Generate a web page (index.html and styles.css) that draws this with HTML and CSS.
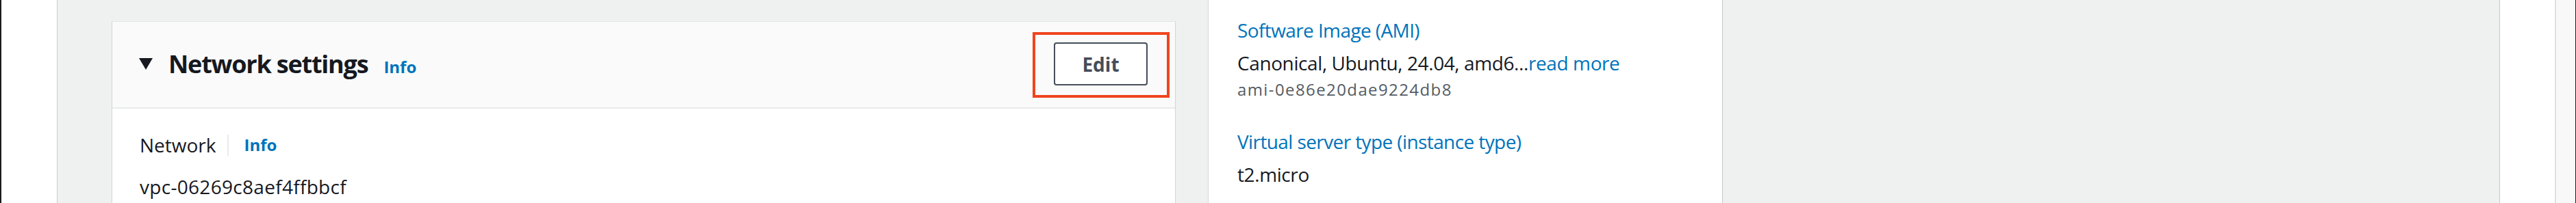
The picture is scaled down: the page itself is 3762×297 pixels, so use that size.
FILE: index.html
```html
<!DOCTYPE html>
<html lang="en">
<head>
  <meta charset="UTF-8" />
  <meta name="viewport" content="width=device-width, initial-scale=1" />
  <title>Launch an instance</title>
  <link rel="stylesheet" href="styles.css">
</head>
<body>
  <nav class="side-nav"></nav>
  <main class="content">
    <section class="panel">
      <header class="panel-header">
        <div class="panel-title">
          <svg class="caret" width="20" height="17" viewBox="0 0 20 17"><polygon points="0,0 20,0 10,17" fill="#16191f"/></svg>
          <h2>Network settings</h2>
          <a class="info-link" href="#">Info</a>
        </div>
        <div class="highlight">
          <button class="btn">Edit</button>
        </div>
      </header>
      <div class="panel-body">
        <div class="field-label">
          <span>Network</span>
          <span class="divider"></span>
          <a class="info-link" href="#">Info</a>
        </div>
        <div class="field-value id-text">vpc-06269c8aef4ffbbcf</div>
      </div>
    </section>

    <aside class="summary">
      <div class="summary-group">
        <a class="summary-label" href="#">Software Image (AMI)</a>
        <div class="summary-value">Canonical, Ubuntu, 24.04, amd6...<a href="#">read more</a></div>
        <div class="summary-sub">ami-0e86e20dae9224db8</div>
      </div>
      <div class="summary-group">
        <a class="summary-label" href="#">Virtual server type (instance type)</a>
        <div class="summary-value">t2.micro</div>
      </div>
    </aside>
  </main>
  <div class="tools-panel"></div>
  <div class="edge-strip"></div>
</body>
</html>
```

FILE: styles.css
```css
body {
  margin: 0;
  height: 297px;
  display: flex;
  overflow: hidden;
  background: #fff;
  color: #16191f;
  font-family: 'Open Sans', 'Noto Sans', sans-serif;
  border-left: 2px solid #1b1b1b;
  border-right: 1px solid #1b1b1b;
}
a {
  color: #0073bb;
  text-decoration: none;
}
.side-nav {
  width: 81px;
  flex-shrink: 0;
  background: #fff;
  border-right: 1px solid #c9cccf;
}
.content {
  flex: 1;
  display: flex;
  gap: 47px;
  padding-left: 79px;
  background: #eff0f0;
  border-right: 1px solid #c4c8cc;
}
.panel {
  width: 1552px;
  flex-shrink: 0;
  margin-top: 31px;
  background: #fff;
  border-top: 1px solid #e3e6e6;
  border-left: 1px solid #d3d7d9;
  border-right: 1px solid #d3d7d9;
}
.panel-header {
  height: 125px;
  display: flex;
  align-items: center;
  justify-content: space-between;
  padding: 0 8px 0 39px;
  background: #fafafa;
  border-bottom: 2px solid #e9ebeb;
}
.panel-title {
  display: flex;
  align-items: baseline;
  margin-top: -2px;
}
.caret {
  margin-right: 23px;
  align-self: center;
  margin-top: -1px;
}
.panel-title h2 {
  margin: 0 23px 0 0;
  font-size: 36px;
  font-weight: 700;
  line-height: 48px;
  letter-spacing: -1.2px;
}
.info-link {
  font-size: 24px;
  font-weight: 700;
}
.highlight {
  padding: 11px 28px 14px 27px;
  border: 4px solid #f0451f;
  margin-top: 1px;
}
.btn {
  display: block;
  width: 137px;
  height: 63px;
  background: #fff;
  border: 2px solid #454d59;
  border-radius: 4px;
  color: #454d59;
  font-family: inherit;
  font-size: 28px;
  font-weight: 700;
  padding: 0;
}
.panel-body {
  padding: 33px 40px 0;
}
.field-label {
  display: flex;
  align-items: center;
  font-size: 28px;
  line-height: 40px;
}
.divider {
  width: 2px;
  height: 31px;
  background: #e9ebed;
  margin: 0 22px 0 17px;
}
.field-value {
  margin-top: 21px;
  font-size: 28px;
  line-height: 40px;
}
.id-text {
  letter-spacing: 0.3px;
}
.summary {
  width: 708px;
  flex-shrink: 0;
  padding: 24px 0 0 42px;
  background: #fff;
  border-left: 1px solid #d3d7d9;
  border-right: 1px solid #c4c8cc;
}
.summary-group + .summary-group {
  margin-top: 40px;
}
.summary-label {
  display: block;
  font-size: 28px;
  line-height: 40px;
  margin-bottom: 8px;
  letter-spacing: -0.6px;
}
.summary-value {
  font-size: 28px;
  line-height: 40px;
  letter-spacing: -0.4px;
}
.summary-sub {
  margin-top: 3px;
  font-size: 24px;
  line-height: 32px;
  color: #545b64;
  letter-spacing: 1.4px;
}
.tools-panel {
  width: 80px;
  flex-shrink: 0;
  background: #fff;
  border-right: 2px solid #e1e1e1;
}
.edge-strip {
  width: 28px;
  flex-shrink: 0;
  background: #f8f8f8;
}
```
